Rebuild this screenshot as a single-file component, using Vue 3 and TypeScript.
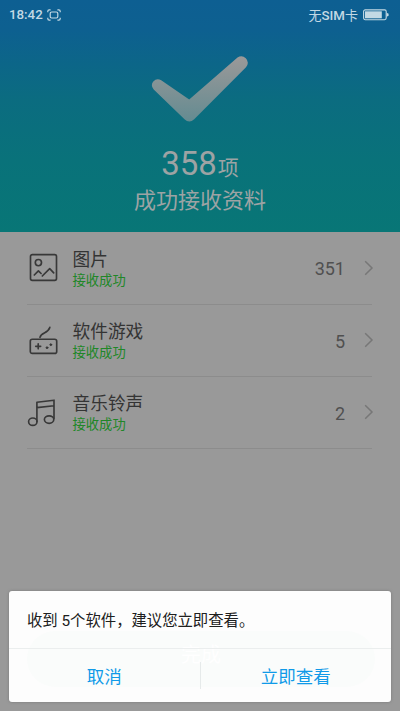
<script setup lang="ts">
interface Item { icon: 'image' | 'game' | 'music'; title: string; count: number }
const items: Item[] = [
  { icon: 'image', title: '图片', count: 351 },
  { icon: 'game', title: '软件游戏', count: 5 },
  { icon: 'music', title: '音乐铃声', count: 2 },
]
</script>

<template>
  <div class="screen">
    <header class="hero">
      <div class="status">
        <span class="time">18:42</span>
        <svg class="shot" width="14" height="12" viewBox="0 0 14 12" fill="none" stroke="currentColor">
          <path d="M.8 3.2V2.2Q.8.8 2.2.8H3.6M10.4.8h1.4q1.4 0 1.4 1.4v1M13.2 8.8v1q0 1.4-1.4 1.4h-1.4M3.6 11.2H2.2Q.8 11.2.8 9.8v-1" stroke-width="1.2" />
          <rect x="3.2" y="3" width="7.6" height="6" rx="1.5" stroke-width="1.2" />
        </svg>
        <span class="sim">无<b>SIM</b>卡</span>
        <svg class="battery" width="26" height="12" viewBox="0 0 26 12">
          <rect x=".6" y=".9" width="22.6" height="9.8" rx="1.6" fill="none" stroke="currentColor" stroke-width="1.1" />
          <rect x="2" y="2.3" width="16.8" height="7" fill="currentColor" />
          <path d="M23.6 3.8l2 1v2l-2 1z" fill="currentColor" />
        </svg>
      </div>
      <svg class="check" width="100" height="72" viewBox="0 0 100 72">
        <defs>
          <linearGradient id="tick" x1="0" y1="0" x2="0" y2="1">
            <stop offset="0" stop-color="#9b9999" />
            <stop offset="1" stop-color="#648b91" />
          </linearGradient>
        </defs>
        <path d="M11.2 30.3L39.2 49.4L87.5 7.6Q91.8 4.4 95.8 8.2Q99.8 12.5 96 17.2L44.2 69.3Q39.3 73.7 34.5 69.3L3.7 39.5Q.2 35.4 3.3 31.5Q6.8 27.5 11.2 30.3Z" fill="url(#tick)" />
      </svg>
      <div class="total"><span class="num">358</span><span class="unit">项</span></div>
      <div class="caption">成功接收资料</div>
    </header>

    <ul class="list">
      <li v-for="item in items" :key="item.icon" class="row">
        <svg class="icon" width="32" height="34" viewBox="0 0 32 34" fill="none" stroke="currentColor" stroke-width="1.65" stroke-linecap="round" stroke-linejoin="round">
          <g v-if="item.icon === 'image'">
            <rect x="3.5" y="4.6" width="26" height="25.8" rx="1.8" />
            <circle cx="11.4" cy="12.6" r="3.1" />
            <path d="M7.3 25L11.4 20.8L14.1 23.5M15.3 26L22.7 18.7L26.7 22.8" />
          </g>
          <g v-else-if="item.icon === 'game'">
            <rect x="3.3" y="16.2" width="26.4" height="14.2" rx="2" />
            <path d="M13 14.3C14 9.3 21 10.6 22.8 4.4M8.7 23.3h5M11.2 20.8v5" />
            <circle cx="20" cy="24.7" r=".9" fill="currentColor" stroke-width="1" />
            <circle cx="23.8" cy="21.7" r=".9" fill="currentColor" stroke-width="1" />
          </g>
          <g v-else>
            <path d="M9.9 26.5V7.2L27 5.2V23.5M9.9 12.6L27 10.7" />
            <ellipse cx="5.8" cy="26.7" rx="4.2" ry="3.7" />
            <ellipse cx="22.1" cy="24.6" rx="4.7" ry="3.7" />
          </g>
        </svg>
        <div class="labels">
          <div class="title">{{ item.title }}</div>
          <div class="state">接收成功</div>
        </div>
        <span class="count">{{ item.count }}</span>
        <svg class="chevron" width="10" height="16" viewBox="0 0 10 16" fill="none" stroke="currentColor" stroke-width="1.5">
          <path d="M1.2 1.2L8 8L1.2 14.8" />
        </svg>
      </li>
    </ul>

    <section class="dialog">
      <div class="ghost">完成</div>
      <p class="message">收到 5个软件，建议您立即查看。</p>
      <div class="actions">
        <button class="action" type="button">取消</button>
        <span class="split"></span>
        <button class="action" type="button">立即查看</button>
      </div>
    </section>
  </div>
</template>

<style>
body { margin: 0; }
</style>

<style scoped>
.screen {
  display: flex;
  flex-direction: column;
  width: 400px;
  height: 711px;
  overflow: hidden;
  background: #999;
  font-family: Roboto, "Noto Sans CJK SC", sans-serif;
}
.hero {
  box-sizing: border-box;
  display: flex;
  flex-direction: column;
  align-items: center;
  flex: none;
  height: 232px;
  background: linear-gradient(#0d5f92 0, #0d6090 30px, #0b6c80 100px, #09727a 160px, #087676 232px);
  color: #9da3a4;
}
.status {
  box-sizing: border-box;
  display: flex;
  align-items: center;
  width: 100%;
  height: 29px;
  padding: 0 11px 0 9px;
  color: #c3d9e4;
  font-size: 13px;
  font-weight: 500;
}
.time { width: 34px; font-size: 13.3px; }
.shot { margin-left: 4px; }
.sim { margin-left: auto; margin-right: 5px; font-weight: 400; }
.sim b { font-weight: 500; font-size: 13.3px; }
.check { flex: none; margin-top: 21px; }
.total { display: flex; align-items: baseline; height: 42px; margin-top: 21px; line-height: 42px; }
.num { font-size: 33px; }
.unit { font-size: 21px; margin-left: 1px; }
.caption { font-size: 22px; line-height: 32px; }
.list { margin: 0; padding: 0 28px 0 27px; list-style: none; }
.row {
  box-sizing: border-box;
  display: flex;
  align-items: center;
  height: 72px;
  border-bottom: 1px solid #8c8c8c;
}
.row:first-child { height: 73px; }
.icon { flex: none; margin-top: -2px; color: #383838; }
.labels { margin-left: 13.5px; padding-top: 4px; }
.title { color: #343434; font-size: 17.7px; line-height: 21px; }
.state { color: #208727; font-size: 13.3px; line-height: 20px; }
.count { margin-left: auto; padding-top: 1px; color: #505050; font-size: 18px; }
.chevron { margin: -1px -1.5px 0 18.5px; color: #777; }
.dialog {
  position: relative;
  box-sizing: border-box;
  height: 111px;
  margin: auto 9px 9px;
  border-radius: 3px;
  background: #fdfdfd;
  box-shadow: 0 0 3px #777;
}
.ghost {
  position: absolute;
  inset: 40px 16px 15px 18px;
  border-radius: 28px;
  background: #fafcfb;
  color: #fff;
  font-size: 20px;
  line-height: 49px;
  text-align: center;
}
.message {
  position: relative;
  box-sizing: border-box;
  height: 58px;
  margin: 0;
  padding: 1px 18px 0;
  border-bottom: 1px solid #ebeeee;
  color: #202020;
  font-size: 15.35px;
  line-height: 58px;
}
.actions { position: relative; display: flex; align-items: center; height: 53px; }
.action {
  flex: 1;
  padding: 0;
  border: 0;
  background: none;
  color: #109ae8;
  font: 400 17.5px Roboto, "Noto Sans CJK SC", sans-serif;
}
.split { width: 1px; height: 27px; background: #e6eaea; }
</style>
